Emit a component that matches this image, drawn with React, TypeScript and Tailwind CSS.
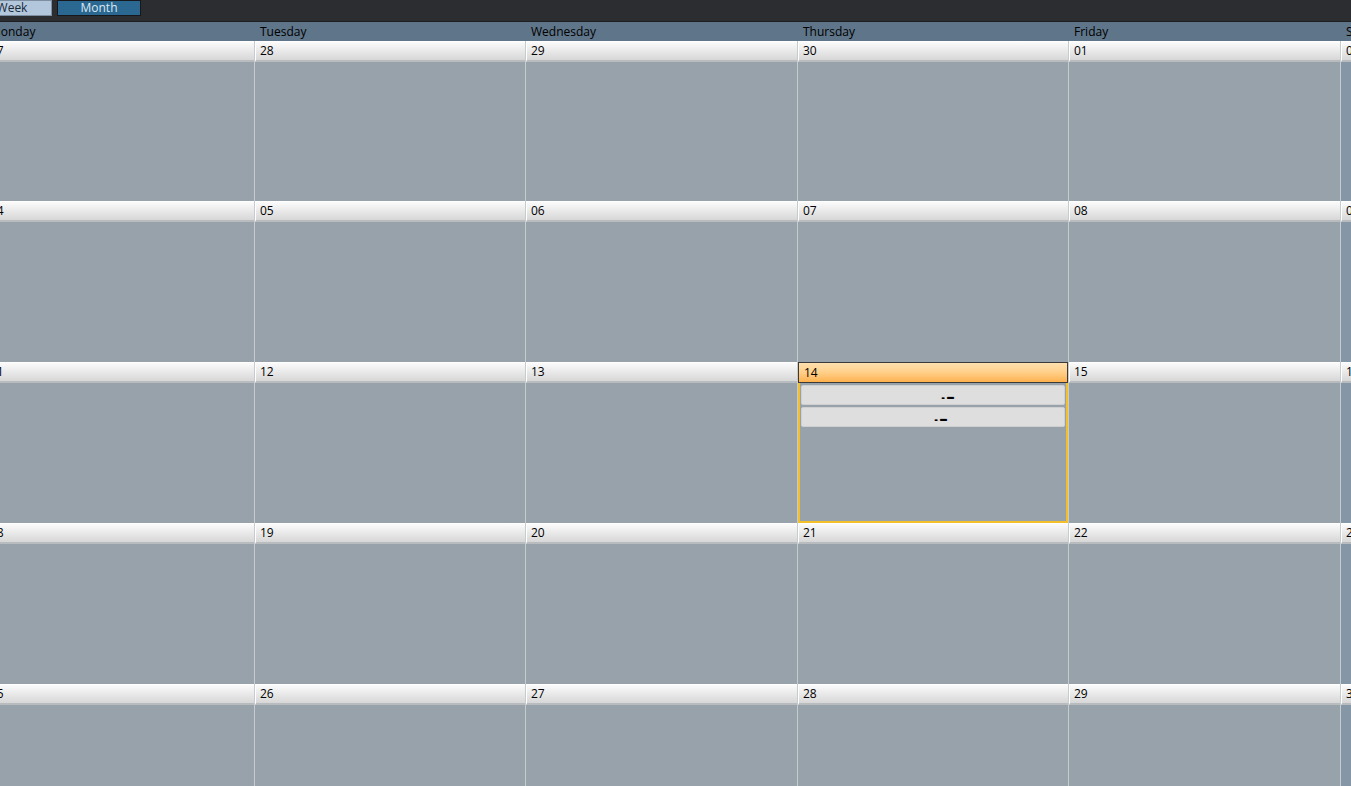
import React from 'react';

const DAY_NAMES = ['Monday', 'Tuesday', 'Wednesday', 'Thursday', 'Friday', 'Saturday', 'Sunday'];

const WEEKS = [
  ['27', '28', '29', '30', '01', '02', '03'],
  ['04', '05', '06', '07', '08', '09', '10'],
  ['11', '12', '13', '14', '15', '16', '17'],
  ['18', '19', '20', '21', '22', '23', '24'],
  ['25', '26', '27', '28', '29', '30', '31'],
];

const ROW_HEIGHTS = ['h-[160px]', 'h-[161px]', 'h-[161px]', 'h-[161px]', 'h-[161px]'];

const TODAY = { week: 2, day: 3 };

// empty appointment: only the time separator and title dash are drawn
function EventItem({ offset }: { offset: string }) {
  return (
    <div className="h-[20px] rounded-[2px] border border-[#cfcfcf] bg-[#dedede] flex items-end justify-center">
      <span className={`${offset} mb-[2px] flex items-end gap-[2px] font-black text-black`}>
        <span className="text-[10px] leading-[9px]">-</span>
        <span className="text-[16px] leading-[12px]">–</span>
      </span>
    </div>
  );
}

function DayCell({ date, isToday, isWeekend, height }: { date: string; isToday: boolean; isWeekend: boolean; height: string }) {
  return (
    <div className={`${height} flex flex-col border-l border-[#c6cbd0] ${isWeekend ? 'bg-[#8597a6]' : 'bg-[#98a2ab]'}`}>
      {isToday ? (
        <div className="h-[21px] border border-[#3a3a3a] bg-gradient-to-b from-[#ffe0ae] via-[#ffcf88] to-[#ffb14c] pl-[5px] flex items-center text-[12px] text-black">
          {date}
        </div>
      ) : (
        <div className="h-[21px] border-t border-l border-white border-b-2 border-b-[#b9bcbf] bg-gradient-to-b from-[#fbfbfb] to-[#d7d7d7] pl-[4px] flex items-center text-[12px] text-black">
          {date}
        </div>
      )}
      {isToday ? (
        <div className="flex-1 border-2 border-t-0 border-[#f3bf2a] px-px pt-[2px] flex flex-col gap-[2px]">
          <EventItem offset="ml-[30px]" />
          <EventItem offset="ml-[16px]" />
        </div>
      ) : (
        <div className="flex-1" />
      )}
    </div>
  );
}

const COLS = 'grid grid-cols-[270px_271px_272px_271px_272px_272px_272px]';

export default function App() {
  return (
    <div className="w-[1351px] h-[786px] overflow-hidden bg-[#98a2ab] font-['Open_Sans','Noto_Sans',sans-serif]">
      <div className="h-[22px] bg-[#2c2d31] border-b border-[#1d1e21] flex items-start gap-[5px]">
        <button className="h-[16px] w-[80px] ml-[-28px] bg-[#b3c7dc] border border-[#7d8ea0] text-[12px] leading-none text-[#1b2a38] flex items-center justify-center">
          Week
        </button>
        <button className="h-[16px] w-[84px] bg-[#2a6791] border border-[#16181b] text-[12px] leading-none text-[#dce7f1] flex items-center justify-center">
          Month
        </button>
      </div>

      <div className="ml-[-16px] w-[1367px]">
        <div className={`${COLS} h-[19px] bg-[#5f7589]`}>
          {DAY_NAMES.map((name) => (
            <div key={name} className="pl-[6px] text-[12px] leading-[19px] text-black">
              {name}
            </div>
          ))}
        </div>

        {WEEKS.map((week, w) => (
          <div key={w} className={COLS}>
            {week.map((date, d) => (
              <DayCell
                key={d}
                date={date}
                height={ROW_HEIGHTS[w]}
                isWeekend={d >= 5}
                isToday={w === TODAY.week && d === TODAY.day}
              />
            ))}
          </div>
        ))}
      </div>
    </div>
  );
}
